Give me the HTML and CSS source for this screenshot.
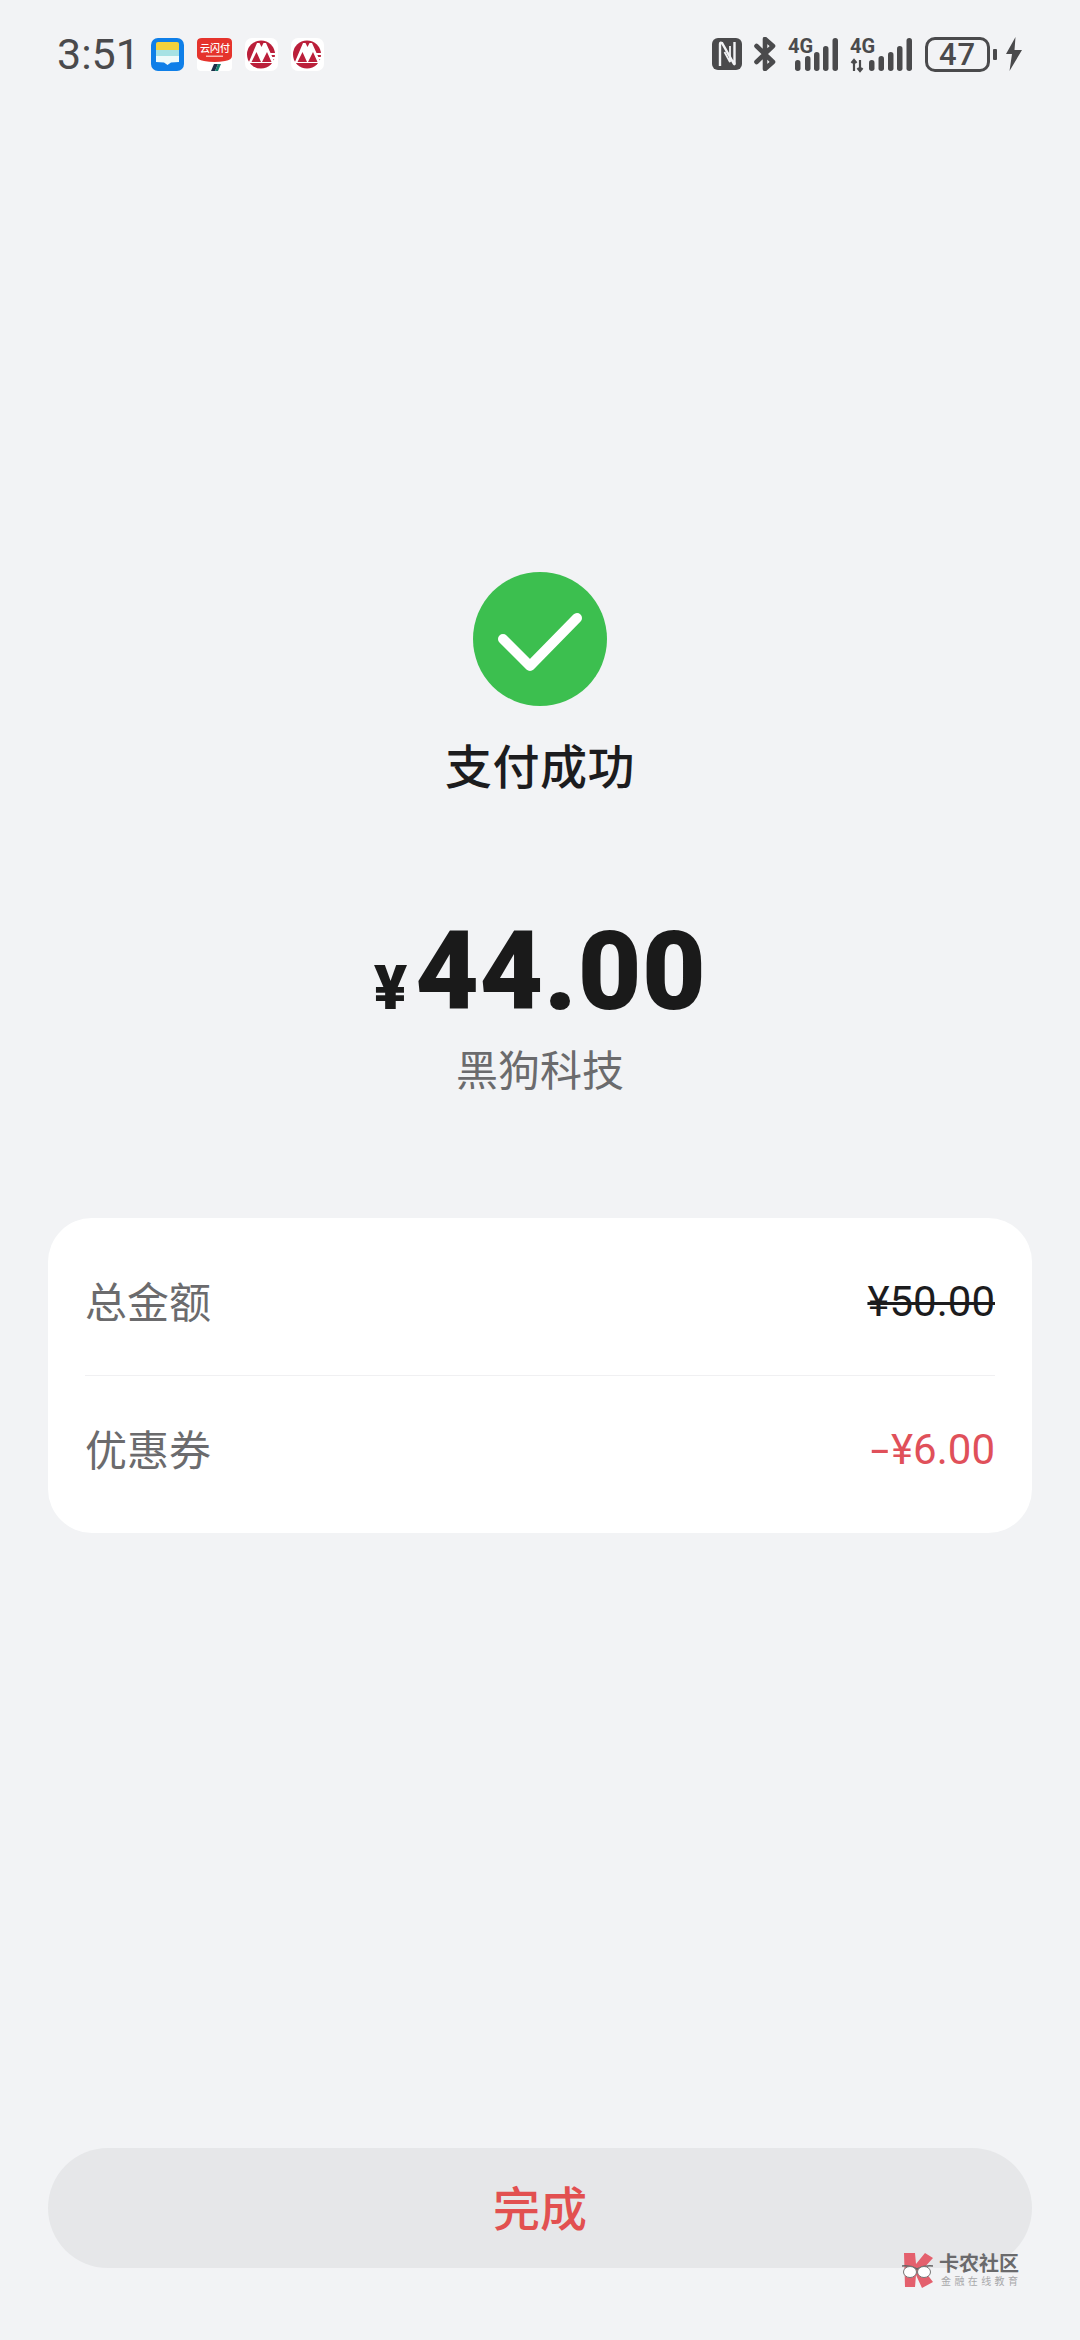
FILE: index.html
```html
<!DOCTYPE html>
<html lang="zh-CN">
<head>
<meta charset="utf-8">
<title>支付成功</title>
<link rel="stylesheet" href="styles.css">
</head>
<body>
<div class="page">
  <header class="status">
    <div class="status-left">
      <span class="time">3:51</span>
      <div class="apps">
        <svg class="app" width="33" height="33" viewBox="0 0 33 33"><rect width="33" height="33" rx="7" fill="#0f7fe8"/><path d="M5 5.500Q5 4 7 4H26Q28 4 28 5.500V12H5Z" fill="#f4d23c"/><rect x="5" y="12" width="23" height="6" fill="#a6e2e4"/><path d="M5 18H28V24L20 24.500L16.500 27L13 24.500L5 24Z" fill="#eefafa"/></svg>
        <svg class="app" width="35" height="33" viewBox="0 0 35 33"><path d="M4 33Q0 33 0 29V4Q0 0 4 0H31Q35 0 35 4V29Q35 33 31 33Z" fill="#fff"/><path d="M0 4Q0 0 5 0H30Q35 0 35 4V18Q35 22 28 23Q17.500 25 7 23Q0 22 0 18Z" fill="#e5332c"/><text class="yun" x="3" y="14">云闪付</text><rect x="9" y="17.500" width="17" height="1.500" fill="#f6b9b5"/><path d="M14 33L17 26H21L18 33Z" fill="#1d2f4a"/><path d="M18 33L21 26H24L21 33Z" fill="#16806f"/></svg>
        <svg class="app" width="33" height="33" viewBox="0 0 33 33"><rect width="33" height="33" rx="7" fill="#fff"/><circle cx="16" cy="16.500" r="14" fill="#bb1f3a"/><path d="M3.500 25L12 5H14.500L16.500 9L18.500 5H21L30 25Z" fill="#fff"/><path d="M6.500 24L11.500 14L16 24ZM17 24L22 14L26.500 24Z" fill="#bb1f3a"/><path d="M24 15H33V17H24ZM26 19H33V21H26Z" fill="#fff"/></svg>
        <svg class="app" width="33" height="33" viewBox="0 0 33 33"><rect width="33" height="33" rx="7" fill="#fff"/><circle cx="16" cy="16.500" r="14" fill="#bb1f3a"/><path d="M3.500 25L12 5H14.500L16.500 9L18.500 5H21L30 25Z" fill="#fff"/><path d="M6.500 24L11.500 14L16 24ZM17 24L22 14L26.500 24Z" fill="#bb1f3a"/><path d="M24 15H33V17H24ZM26 19H33V21H26Z" fill="#fff"/></svg>
      </div>
    </div>
    <div class="status-right">
      <svg class="nfc" width="30" height="32" viewBox="0 0 30 32"><rect width="30" height="32" rx="6" fill="#4a4a4c"/><path d="M8 28V6Q8 4 10 5L22 26Q23 27 22.500 24V4" stroke="#f2f3f5" stroke-width="2.400" fill="none"/><path d="M12.500 14L18 24V8" stroke="#f2f3f5" stroke-width="1.800" fill="none"/></svg>
      <svg class="bt" width="22" height="34" viewBox="0 0 22 34"><path d="M2.500 9L19 25L11 32V2L19 9L2.500 25" stroke="#4a4a4c" stroke-width="4.600" fill="none" stroke-linejoin="round" stroke-linecap="round"/></svg>
      <svg class="sig1" width="50" height="38" viewBox="0 -2 50 38"><text class="g4" x="0" y="16">4G</text><g fill="#4a4a4c"><rect x="7" y="23" width="5.500" height="11" rx="2.700"/><rect x="17" y="19" width="5.500" height="15" rx="2.700"/><rect x="26" y="15" width="5.500" height="19" rx="2.700"/><rect x="35" y="9" width="5.500" height="25" rx="2.700"/><rect x="44.500" y="1" width="5.500" height="33" rx="2.700"/></g></svg>
      <svg class="sig2" width="62" height="38" viewBox="0 -2 62 38"><text class="g4" x="0" y="16">4G</text><path d="M4 34V23M1.500 26L4 23L6.500 26M10 23V34M7.500 31L10 34L12.500 31" stroke="#4a4a4c" stroke-width="2.200" fill="none"/><g fill="#4a4a4c"><rect x="19" y="23" width="5.500" height="11" rx="2.700"/><rect x="28.500" y="19" width="5.500" height="15" rx="2.700"/><rect x="38" y="15" width="5.500" height="19" rx="2.700"/><rect x="47" y="9" width="5.500" height="25" rx="2.700"/><rect x="56.500" y="1" width="5.500" height="33" rx="2.700"/></g></svg>
      <div class="battery"><span class="batt-body">47</span><span class="batt-nub"></span></div>
      <svg class="bolt" width="16" height="34" viewBox="0 0 16 34"><path d="M9.500 0L0 17H6L3.500 34L16 13H8.500Z" fill="#4a4a4c"/></svg>
    </div>
  </header>

  <main class="main">
    <section class="result">
      <svg class="tick" width="134" height="134" viewBox="0 0 134 134"><circle cx="67" cy="67" r="67" fill="#3cbf4f"/><path d="M30 67L57 94L104 46" stroke="#fff" stroke-width="10" fill="none" stroke-linecap="round" stroke-linejoin="round"/></svg>
      <h1 class="title">支付成功</h1>
      <div class="amount"><span class="yen">¥</span><span class="num">44.00</span></div>
      <div class="merchant">黑狗科技</div>
    </section>

    <section class="card">
      <div class="row row-top">
        <span class="label">总金额</span>
        <span class="value strike">¥50.00</span>
      </div>
      <div class="divider"></div>
      <div class="row row-bottom">
        <span class="label">优惠券</span>
        <span class="value discount"><span class="dash">-</span>¥6.00</span>
      </div>
    </section>

    <button class="done">完成</button>
  </main>

  <div class="watermark">
    <svg width="32" height="36" viewBox="0 0 32 36"><path d="M2 1H13L14 12L23 1L31 6L21 17L31 30L20 36L14 23L13 35H3Z" fill="#e4606d"/><path d="M0 14Q8 13 15 17Q23 13 31 14" stroke="#666" stroke-width="1.500" fill="none"/><ellipse cx="8" cy="20" rx="6.500" ry="5.500" fill="#fff" stroke="#777" stroke-width="1"/><ellipse cx="22" cy="20" rx="6.500" ry="5.500" fill="#fff" stroke="#777" stroke-width="1"/></svg>
    <div class="wm-text">
      <span class="wm-main">卡农社区</span>
      <span class="wm-sub">金融在线教育</span>
    </div>
  </div>
</div>
</body>
</html>
```
FILE: styles.css
```css
* { box-sizing: border-box; }
html, body { margin: 0; padding: 0; }
body {
  background: #f2f3f5;
  font-family: Roboto, "Noto Sans CJK SC", sans-serif;
}
.page {
  position: relative;
  width: 1080px;
  height: 2340px;
  display: flex;
  flex-direction: column;
  background: #f2f3f5;
  overflow: hidden;
}
.status {
  height: 72px;
  padding: 36px 58px 0 57px;
  display: flex;
  justify-content: space-between;
  align-items: flex-start;
  flex: none;
}
.status-left { display: flex; align-items: center; height: 36px; }
.time {
  width: 94px;
  font-size: 43px;
  line-height: 36px;
  color: #4a4a4c;
}
.apps { display: flex; align-items: center; gap: 13px; }
.yun {
  font-family: "Noto Sans CJK SC", sans-serif;
  font-size: 10px;
  font-weight: 500;
  fill: #fff;
}
.status-right { display: flex; align-items: center; height: 36px; }
.status-right svg { flex: none; }
.bt, .sig1, .sig2 { margin-left: 12px; }
.g4 {
  font-family: Roboto, sans-serif;
  font-size: 20px;
  font-weight: 700;
  fill: #4a4a4c;
}
.battery { display: flex; align-items: center; margin-left: 13px; }
.batt-body {
  width: 65px;
  height: 35px;
  border: 3px solid #4a4a4c;
  border-radius: 10px;
  display: flex;
  align-items: center;
  justify-content: center;
  font-size: 31px;
  font-weight: 500;
  letter-spacing: 1px;
  color: #4a4a4c;
}
.batt-nub {
  width: 4px;
  height: 11px;
  margin-left: 3px;
  border-radius: 1px;
  background: #4a4a4c;
}
.bolt { margin-left: 9px; }
.main {
  flex: 1;
  display: flex;
  flex-direction: column;
  padding: 500px 48px 72px;
}
.result { display: flex; flex-direction: column; align-items: center; }
.tick { display: block; }
.title {
  margin: 34px 0 0;
  font-size: 47px;
  line-height: 56px;
  font-weight: 500;
  letter-spacing: 0.5px;
  color: #1c1c1e;
}
.amount {
  display: flex;
  align-items: baseline;
  margin-top: 120px;
  height: 112px;
  line-height: 112px;
  color: #1a1a1a;
}
.yen { font-size: 62px; font-weight: 900; margin-right: 8px; }
.num { font-size: 110px; font-weight: 900; letter-spacing: 0.5px; }
.merchant {
  margin-top: 18px;
  font-size: 42px;
  line-height: 52px;
  color: #6b6b6d;
}
.card {
  margin-top: 120px;
  height: 315px;
  padding: 0 37px;
  background: #fff;
  border-radius: 44px;
  display: flex;
  flex-direction: column;
}
.row {
  flex: 1;
  display: flex;
  justify-content: space-between;
  align-items: center;
}
.row-top { padding-top: 10px; }
.row-bottom { padding-bottom: 10px; }
.divider { height: 1px; background: #f0f0f2; flex: none; }
.label { font-size: 42px; color: #6b6b6d; margin-bottom: 5px; }
.value { font-size: 42px; }
.strike { color: #1c1c1e; text-decoration: line-through; text-decoration-thickness: 3px; }
.discount { color: #e0505a; }
.dash {
  display: inline-block;
  transform: scaleX(1.600);
  margin-right: 5px;
}
.done {
  margin-top: auto;
  height: 120px;
  padding: 0 0 5px;
  border: 0;
  border-radius: 60px;
  background: #e6e7e9;
  color: #e25050;
  font-family: inherit;
  font-size: 47px;
  font-weight: 500;
}
.watermark {
  position: absolute;
  left: 902px;
  top: 2252px;
  display: flex;
  align-items: center;
  gap: 5px;
}
.wm-text { display: flex; flex-direction: column; }
.wm-main {
  font-size: 20px;
  line-height: 22px;
  font-weight: 700;
  color: #6a6a6c;
}
.wm-sub {
  font-size: 10px;
  line-height: 13px;
  letter-spacing: 3.400px;
  color: #a8a8aa;
  padding-left: 2px;
}
```
